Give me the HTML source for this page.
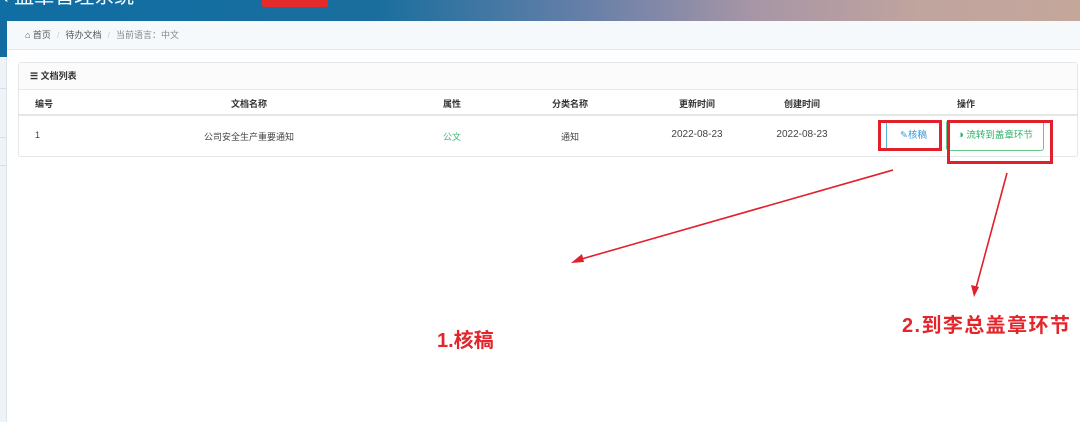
<!DOCTYPE html>
<html><head><meta charset="utf-8"><style>
*{margin:0;padding:0;box-sizing:border-box}
body{width:1080px;height:422px;overflow:hidden;background:#fff;font-family:"Liberation Sans","Noto Sans CJK SC",sans-serif;position:relative;color:#333}
.hdr{position:absolute;left:0;top:0;width:1080px;height:21px;overflow:hidden;background:linear-gradient(90deg,#0f6ea3 0%,#1a6e9e 35%,#6a80a8 55%,#a896a6 70%,#c0a49e 85%,#c4a69a 100%)}
.title{position:absolute;left:2px;top:-20px;color:#fff;font-size:20px;white-space:nowrap}
.redblk{position:absolute;left:262px;top:0;width:66px;height:7px;background:#e52a2a;border-radius:0 0 2px 2px}
.side{position:absolute;left:0;top:21px;width:7px;height:401px;background:#eef3f8;border-right:1px solid #dde4ea}
.sideb{position:absolute;left:0;top:21px;width:7px;height:36px;background:#136c9f}
.sl{position:absolute;left:0;width:7px;height:1px;background:#d8dee5}
.bc{position:absolute;left:7px;top:21px;width:1073px;height:29px;background:#f6f9fc;border-bottom:1px solid #e1e8ee;font-size:9px;color:#555;line-height:29px;padding-left:18px}
.bc .s{color:#ccc;margin:0 6px}
.bc .g{color:#888}
.panel{position:absolute;left:18px;top:62px;width:1060px;height:95px;border:1px solid #e4e7ea;border-radius:3px;background:#fff}
.ph{position:absolute;left:0;top:0;width:100%;height:27px;background:#fbfbfb;border-bottom:1px solid #e8e8e8;font-size:9px;font-weight:bold;line-height:26px;padding-left:11px;color:#333}
.thl{position:absolute;left:0;top:51px;width:100%;height:2px;background:#e4e6e8}
.c{position:absolute;font-size:9px;white-space:nowrap;transform:translateX(-50%)}
.h{top:34px;font-weight:bold;color:#333}
.d{top:67px;color:#444}
.btn{position:absolute;top:57px;height:31px;line-height:29px;border-radius:3px;background:#fff;font-size:9.5px;text-align:center}
.b1{left:867px;border:1px solid #5ab2de;color:#3a9ad8;width:55px}
.b2{left:927px;border:1px solid #62c98a;color:#2fb06a;width:98px}
.rb{position:absolute;border:3px solid #e0202a}
.lbl{position:absolute;color:#e3262c;font-weight:bold;white-space:nowrap}
</style></head><body>
<div class="hdr"><div class="title">‹ 盖章管理系统</div><div class="redblk"></div></div>
<div class="side"></div><div class="sideb"></div>
<div class="sl" style="top:88px"></div><div class="sl" style="top:137px"></div><div class="sl" style="top:165px"></div>
<div class="bc">&#8962; 首页<span class="s">/</span>待办文档<span class="s">/</span><span class="g">当前语言：中文</span></div>
<div class="panel">
<div class="ph">☰ 文档列表</div>
<div class="thl"></div>
<div class="c h" style="left:16px;transform:none">编号</div>
<div class="c h" style="left:230px">文档名称</div>
<div class="c h" style="left:433px">属性</div>
<div class="c h" style="left:551px">分类名称</div>
<div class="c h" style="left:678px">更新时间</div>
<div class="c h" style="left:783px">创建时间</div>
<div class="c h" style="left:947px">操作</div>
<div class="c d" style="left:16px;transform:none">1</div>
<div class="c d" style="left:230px">公司安全生产重要通知</div>
<div class="c d" style="left:433px;color:#3cb878">公文</div>
<div class="c d" style="left:551px">通知</div>
<div class="c d" style="left:678px;font-size:10px;top:66px">2022-08-23</div>
<div class="c d" style="left:783px;font-size:10px;top:66px">2022-08-23</div>
<div class="btn b1">&#9998;核稿</div>
<div class="btn b2"><span style="color:#2fb06a;font-size:11px">&#9681;</span> 流转到盖章环节</div>
</div>
<div class="rb" style="left:878px;top:120px;width:64px;height:31px"></div>
<div class="rb" style="left:947px;top:120px;width:106px;height:44px"></div>
<svg style="position:absolute;left:0;top:0" width="1080" height="422">
<line x1="893" y1="170" x2="578" y2="260" stroke="#e0202a" stroke-width="1.6"/>
<polygon points="571,263 582,254 584,262" fill="#e0202a"/>
<line x1="1007" y1="173" x2="976" y2="288" stroke="#e0202a" stroke-width="1.6"/>
<polygon points="974,297 971,285 979,287" fill="#e0202a"/>
</svg>
<div class="lbl" style="left:437px;top:324px;font-size:20px">1.核稿</div>
<div class="lbl" style="left:902px;top:309px;font-size:20px;letter-spacing:1.4px">2.到李总盖章环节</div>
</body></html>
